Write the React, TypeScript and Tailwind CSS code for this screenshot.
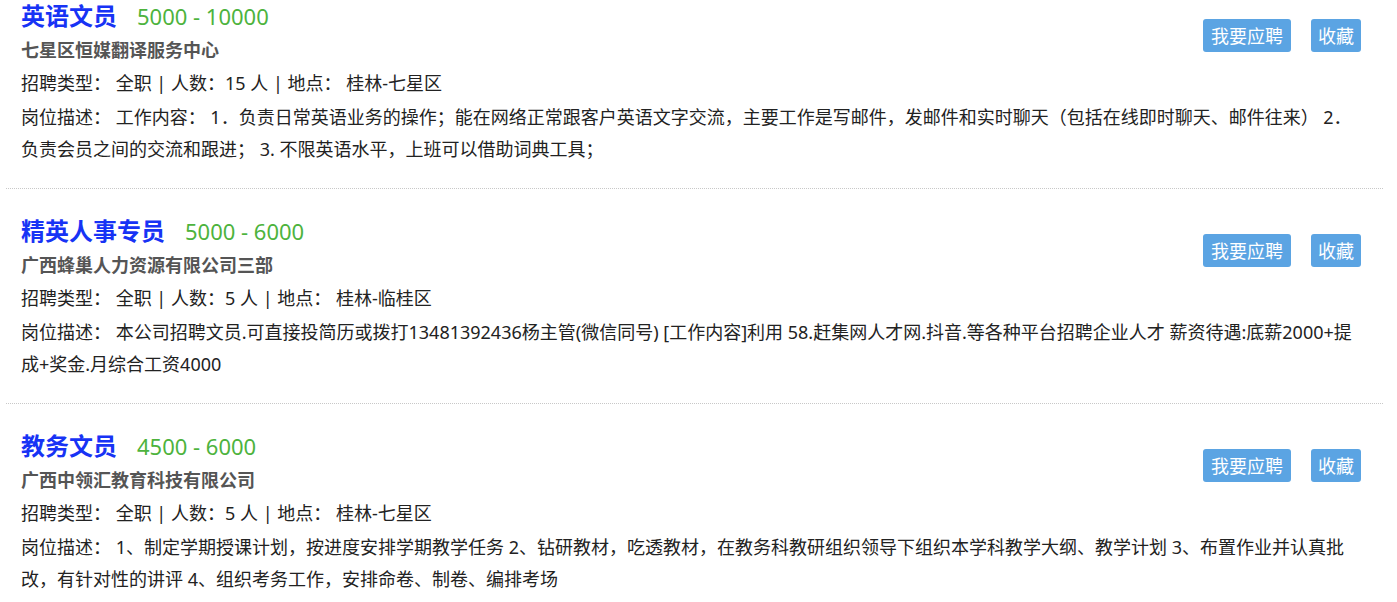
import React from 'react';

type Job = {
    id: number;
    title: string;
    salary: string;
    company: string;
    headcount: string;
    location: string;
    // description is kept as the lines the page shows
    description: string[];
};

const jobs: Job[] = [
    {
        id: 1,
        title: '英语文员',
        salary: '5000 - 10000',
        company: '七星区恒媒翻译服务中心',
        headcount: '15',
        location: '桂林-七星区',
        description: [
            '岗位描述： 工作内容： 1．负责日常英语业务的操作；能在网络正常跟客户英语文字交流，主要工作是写邮件，发邮件和实时聊天（包括在线即时聊天、邮件往来） 2．',
            '负责会员之间的交流和跟进； 3. 不限英语水平，上班可以借助词典工具；',
        ],
    },
    {
        id: 2,
        title: '精英人事专员',
        salary: '5000 - 6000',
        company: '广西蜂巢人力资源有限公司三部',
        headcount: '5',
        location: '桂林-临桂区',
        description: [
            '岗位描述： 本公司招聘文员.可直接投简历或拨打13481392436杨主管(微信同号) [工作内容]利用 58.赶集网人才网.抖音.等各种平台招聘企业人才 薪资待遇:底薪2000+提',
            '成+奖金.月综合工资4000',
        ],
    },
    {
        id: 3,
        title: '教务文员',
        salary: '4500 - 6000',
        company: '广西中领汇教育科技有限公司',
        headcount: '5',
        location: '桂林-七星区',
        description: [
            '岗位描述： 1、制定学期授课计划，按进度安排学期教学任务 2、钻研教材，吃透教材，在教务科教研组织领导下组织本学科教学大纲、教学计划 3、布置作业并认真批',
            '改，有针对性的讲评 4、组织考务工作，安排命卷、制卷、编排考场',
        ],
    },
];

const JobItem: React.FC<{ job: Job }> = ({ job }) => (
    <div className="border-b border-dotted border-[#c8c8c8] pl-[15px] pr-[22px] pt-[24px] pb-[23px]">
        <div className="flex justify-between items-start">
            <div>
                <div className="h-[36px] flex items-center">
                    <span className="text-[24px] font-bold text-[#1733f5] leading-none">{job.title}</span>
                    <span className="ml-[20px] text-[22px] text-[#4db33d] leading-none">{job.salary}</span>
                </div>
                <div className="text-[18px] leading-[32px] font-bold text-[#555555]">{job.company}</div>
            </div>
            <div className="flex gap-[20px] mt-[21px]">
                <button className="h-[33px] px-[8px] rounded-[3px] bg-[#5ba4e3] text-white text-[18px] leading-none">我要应聘</button>
                <button className="h-[33px] px-[7px] rounded-[3px] bg-[#5ba4e3] text-white text-[18px] leading-none">收藏</button>
            </div>
        </div>
        <div className="mt-[1px] text-[18px] leading-[32px] text-[#222222] whitespace-nowrap">
            招聘类型： 全职 | 人数：{job.headcount} 人 | 地点： {job.location}
        </div>
        <div className="mt-[2px] text-[18px] leading-[32px] text-[#222222]">
            {job.description.map((line, i) => (
                <div key={i} className="whitespace-nowrap">{line}</div>
            ))}
        </div>
    </div>
);

export default function App() {
    return (
        <div className="bg-white min-h-screen font-['Noto_Sans','Noto_Sans_CJK_SC',sans-serif] overflow-hidden">
            <div className="ml-[6px] w-[1377px] -mt-[26px]">
                {jobs.map((job) => (
                    <JobItem key={job.id} job={job} />
                ))}
            </div>
        </div>
    );
}
